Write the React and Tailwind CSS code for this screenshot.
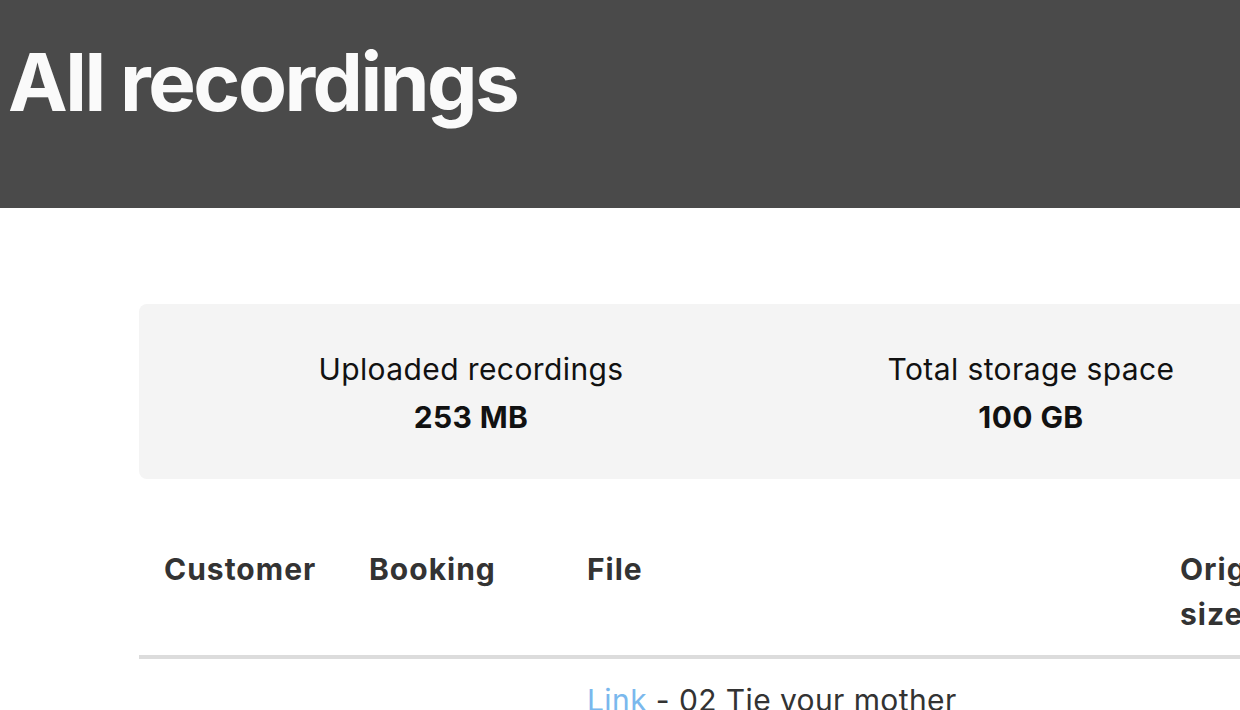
const stats = [
  { label: "Uploaded recordings", value: "253 MB" },
  { label: "Total storage space", value: "100 GB" },
  { label: "Available space", value: "99.7 GB" },
];

const App = () => {
  return (
    <div
      className="h-screen w-full overflow-hidden bg-white"
      style={{ fontFamily: "Inter, 'Noto Sans', sans-serif" }}
    >
      <header className="h-[208px] bg-[#4a4a4a] pt-[42px] pl-[8px]">
        <h1 className="text-[80px] leading-none font-bold tracking-[-2.5px] text-[#fafafa] whitespace-nowrap">
          All recordings
        </h1>
      </header>

      <main className="pl-[139px] pt-[96px] w-[2000px]">
        <div className="w-[1800px] rounded-lg bg-[#f4f4f4] pt-[41px] pb-[38px] pl-[52px] flex">
          {stats.map((s) => (
            <div key={s.label} className="w-[560px] text-center text-[30px] leading-[48px] tracking-[0.4px] text-[#111]">
              <p>{s.label}</p>
              <p className="font-bold">{s.value}</p>
            </div>
          ))}
        </div>

        <table className="mt-[48px] border-collapse text-[30px] leading-[45px] text-[#333]">
          <thead>
            <tr className="border-b-4 border-[#dcdcdc]">
              <th className="w-[205px] px-[25px] pt-[20px] pb-[18px] text-left align-top font-bold tracking-[1px]">Customer</th>
              <th className="w-[218px] px-[25px] pt-[20px] pb-[18px] text-left align-top font-bold tracking-[1px]">Booking</th>
              <th className="w-[593px] px-[25px] pt-[20px] pb-[18px] text-left align-top font-bold tracking-[1px]">File</th>
              <th className="w-[175px] px-[25px] pt-[20px] pb-[18px] text-left align-top font-bold tracking-[1px]">Original size</th>
              <th className="w-[220px] px-[25px] pt-[20px] pb-[18px] text-left align-top font-bold tracking-[1px]">Uploaded</th>
            </tr>
          </thead>
          <tbody className="tracking-[0.4px]">
            <tr>
              <td className="px-[25px] py-[19px] align-middle">Anna</td>
              <td className="px-[25px] py-[19px] align-middle">#1042</td>
              <td className="px-[25px] py-[19px] align-top">
                <a href="#" className="text-[#7ab8ed]">Link</a> - 02 Tie your mother down_(Remastered_2011).mp3
              </td>
              <td className="px-[25px] py-[19px] align-middle">8.4 MB</td>
              <td className="px-[25px] py-[19px] align-middle">2021-03-14</td>
            </tr>
          </tbody>
        </table>
      </main>
    </div>
  );
};

export default App;
